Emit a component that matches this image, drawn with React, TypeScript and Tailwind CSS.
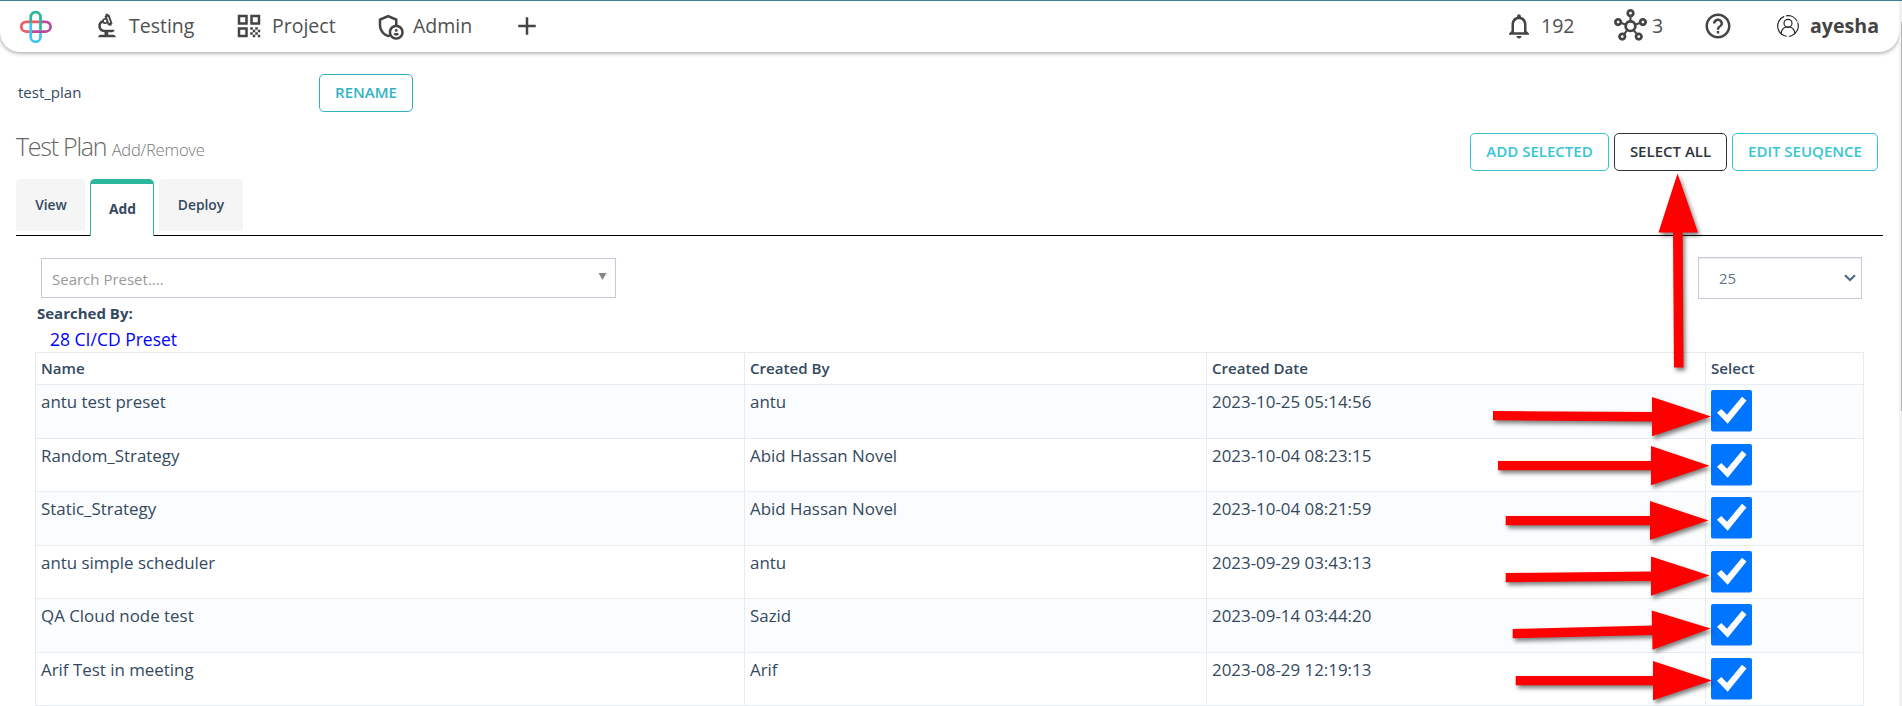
import React from "react";
import {
  MdAdd,
  MdHelpOutline,
  MdOutlineAdminPanelSettings,
  MdOutlineBiotech,
  MdOutlineHub,
  MdOutlineNotifications,
  MdQrCode,
} from "react-icons/md";

type Row = { name: string; by: string; date: string; height: string };

const rows: Row[] = [
  { name: "antu test preset", by: "antu", date: "2023-10-25 05:14:56", height: "h-[54px]" },
  { name: "Random_Strategy", by: "Abid Hassan Novel", date: "2023-10-04 08:23:15", height: "h-[53px]" },
  { name: "Static_Strategy", by: "Abid Hassan Novel", date: "2023-10-04 08:21:59", height: "h-[54px]" },
  { name: "antu simple scheduler", by: "antu", date: "2023-09-29 03:43:13", height: "h-[53px]" },
  { name: "QA Cloud node test", by: "Sazid", date: "2023-09-14 03:44:20", height: "h-[54px]" },
  { name: "Arif Test in meeting", by: "Arif", date: "2023-08-29 12:19:13", height: "h-[53px]" },
];

function Logo() {
  return (
    <svg className="h-8 w-8" viewBox="0 0 32 32" fill="none" strokeWidth="2.7">
      <path d="M11 20.6H6.2a4.9 4.9 0 0 1 0-9.8H20" stroke="#ee5a66" />
      <path d="M10.7 20.6h15a4.9 4.9 0 0 0 0-9.8H20.6" stroke="#b84a9c" />
      <path d="M10.7 12.5V6a4.9 4.9 0 0 1 9.8 0v13.2" stroke="#2bb79b" />
      <path d="M10.7 12.2v13.7a4.9 4.9 0 0 0 9.8 0V22" stroke="#3cc4f5" />
    </svg>
  );
}

function UserIcon() {
  return (
    <svg className="h-[22px] w-[22px]" viewBox="0 0 22 22" fill="none" stroke="#222" strokeWidth="1.15">
      <circle cx="11" cy="11" r="10.3" strokeDasharray="19 2 27 2 13 1.7" transform="rotate(-20 11 11)" />
      <circle cx="11" cy="8.3" r="4" />
      <path d="M4.2 18.4c.3-3.9 2.5-5.8 5-6.4h3.6c2.5.6 4.7 2.5 5 6.4" />
    </svg>
  );
}

function Check() {
  return (
    <svg className="block h-[41.5px] w-[41px]" viewBox="0 0 41 41.5">
      <rect width="41" height="41.5" rx="2" fill="#0075ff" />
      <path d="M6 22.7 10.3 18.9 16 24.7 31 6.7 35.5 10.4 16.7 33.7Z" fill="#fff" />
    </svg>
  );
}

const arrows = [
  "1677.5,173.5 1698,232.5 1682.7,232.5 1683.5,367.5 1674,367.5 1673,232.5 1658.5,232.5",
  "1711,416.5 1652,436.3 1652,421.5 1493,420.3 1493,411 1652,412 1652,397",
  "1709.5,465.7 1651,485.3 1651,470.3 1498,470.3 1498,461 1651,461 1651,446",
  "1708.5,520.6 1650,540 1650,525.3 1505.7,525.3 1505.7,516 1650,516 1650,501",
  "1709.7,575.5 1651,595.8 1651,581 1505.7,582.2 1505.7,573 1651,571.4 1651,556.6",
  "1710.7,628.6 1652.5,649.8 1652.3,635 1512.7,638.2 1512.7,629 1652,625.5 1651.7,610.6",
  "1712,680.5 1653,700.3 1653,685.3 1515.7,685.3 1515.7,676 1653,676 1653,661",
];

const button =
  "flex h-[38px] items-center justify-center rounded-[5px] border pb-px text-[15px] font-semibold leading-none";

export default function App() {
  return (
    <div className="relative flex h-[706px] w-[1902px] overflow-hidden bg-white font-['Open_Sans',sans-serif] text-[#34495e]">
      <div className="flex w-[1899px] flex-col">
        <header className="flex h-[52px] shrink-0 items-center rounded-b-[20px] border-t border-[#3f7f91] bg-white px-5 text-[19.5px] text-[#505050] shadow-[0_1px_4px_rgba(0,0,0,0.4)] [&_svg]:text-[#444]">
          <Logo />
          <nav className="flex items-center pb-[2px]">
            <a className="ml-[40px] flex w-[142px] items-center gap-[7px]">
              <MdOutlineBiotech className="h-[30px] w-[30px]" />
              Testing
            </a>
            <a className="flex w-[141px] items-center gap-[8px]">
              <MdQrCode className="h-[30px] w-[30px]" />
              Project
            </a>
            <a className="flex w-[137px] items-center gap-[8px]">
              <MdOutlineAdminPanelSettings className="h-[30px] w-[30px]" />
              Admin
            </a>
            <MdAdd className="h-[30px] w-[30px]" />
          </nav>
          <div className="ml-auto flex items-center pb-[2px]">
            <MdOutlineNotifications className="h-[30px] w-[30px]" />
            <span className="ml-[7px] w-[73px]">192</span>
            <MdOutlineHub className="h-[33px] w-[33px]" />
            <span className="ml-[5px] w-[51px]">3</span>
            <MdHelpOutline className="h-[30px] w-[30px]" />
            <span className="ml-[44px] mr-[11px]">
              <UserIcon />
            </span>
            <b className="text-[19.6px] font-bold text-[#444]">ayesha</b>
          </div>
        </header>

        <div className="flex items-center pl-[18px] pt-[22px] text-[15px]">
          <span className="w-[301px] pb-px">test_plan</span>
          <button className={`${button} w-[94px] border-[#31b3c4] text-[#31b3c4]`}>RENAME</button>
        </div>

        <div className="mt-[21px] flex h-[38px] items-center justify-between pl-4 pr-[21px]">
          <h1 className="mt-[-11px] text-[25px] font-light tracking-[-1.25px] text-[#666]">
            Test Plan <small className="text-[16.6px] tracking-[-0.25px] text-[#777]">Add/Remove</small>
          </h1>
          <div className="flex gap-[5px]">
            <button className={`${button} w-[139px] border-[#36c6d3] text-[#36c6d3]`}>ADD SELECTED</button>
            <button className={`${button} w-[113px] border-[#2f353b] text-[#2f353b]`}>SELECT ALL</button>
            <button className={`${button} w-[146px] border-[#36c6d3] text-[#36c6d3]`}>EDIT SEUQENCE</button>
          </div>
        </div>

        <div className="mx-4 mt-2 flex h-[57px] items-start gap-[5px] border-b border-black text-[13.8px] font-semibold">
          <span className="flex h-[52px] w-[69px] items-center justify-center rounded-t-[4px] bg-[#f5f5f5] pl-px">View</span>
          <span className="flex h-[57px] w-[64px] items-center justify-center rounded-t-[5px] border-x border-t-[5px] border-[#2bb79b] bg-white pb-[2px] pl-px font-bold">
            Add
          </span>
          <span className="flex h-[52px] w-[84px] items-center justify-center rounded-t-[4px] bg-[#f5f5f5]">Deploy</span>
        </div>

        <div className="mt-[21px] flex items-center justify-between pl-[41px] pr-[37px]">
          <div className="flex h-[40px] w-[575px] items-center justify-between border border-[#c2cad8] pl-[10px] pr-2 pt-[3px] text-[15px] text-[#999]">
            Search Preset....
            <svg className="mb-[7px] h-[7px] w-[9px]" viewBox="0 0 9 7">
              <path d="M.5 0h8L4.5 7z" fill="#888" />
            </svg>
          </div>
          <div className="flex h-[42px] w-[164px] items-center justify-between border border-[#c2cad8] pl-5 pr-[5px] text-[15px] text-[#5b7592] shadow-[inset_0_1px_1px_rgba(0,0,0,0.075)]">
            25
            <svg className="h-[8px] w-[12px]" viewBox="0 0 12 8" fill="none" stroke="#4f6b8a" strokeWidth="2.2">
              <path d="M1 1.2 6 6 11 1.2" />
            </svg>
          </div>
        </div>

        <div className="mt-[3px] pl-[37px] text-[15px] font-bold leading-[22px]">Searched By:</div>
        <a className="pl-[50px] pt-[2px] text-[17.5px] leading-[26px] text-[#00f]">28 CI/CD Preset</a>

        <table className="ml-[35px] w-[1829px] table-fixed border-collapse text-left text-[16.9px] leading-[23px] [&_td]:border [&_td]:border-[#e7ecf1] [&_th]:border [&_th]:border-[#e7ecf1]">
          <colgroup>
            <col className="w-[709px]" />
            <col className="w-[462px]" />
            <col className="w-[499px]" />
            <col />
          </colgroup>
          <thead>
            <tr className="h-[32px] text-[15.1px]">
              {["Name", "Created By", "Created Date", "Select"].map((h) => (
                <th key={h} className="px-[5px] pb-[2px] pt-0 font-semibold leading-[20px]">
                  {h}
                </th>
              ))}
            </tr>
          </thead>
          <tbody>
            {rows.map((r) => (
              <tr key={r.name} className={`${r.height} align-top odd:bg-[#fbfcfd]`}>
                <td className="px-[5px] pb-0 pt-[4.5px]">{r.name}</td>
                <td className="px-[5px] pb-0 pt-[4.5px]">{r.by}</td>
                <td className="px-[5px] pb-0 pt-[4.5px]">{r.date}</td>
                <td className="px-[5px] pb-0 pt-[5.4px]">
                  <Check />
                </td>
              </tr>
            ))}
          </tbody>
        </table>
      </div>

      <div className="flex w-[3px] flex-col items-end border-t border-[#3f7f91] bg-[#f1f1f1] pt-[21px]">
        <div className="h-[389px] w-px bg-[#b5b5b5]" />
      </div>

      <svg
        className="pointer-events-none absolute inset-0 h-[706px] w-[1902px] drop-shadow-[2px_3px_2px_rgba(0,0,0,0.5)]"
        viewBox="0 0 1902 706"
        fill="#fe0000"
      >
        {arrows.map((points) => (
          <polygon key={points} points={points} />
        ))}
      </svg>
    </div>
  );
}
